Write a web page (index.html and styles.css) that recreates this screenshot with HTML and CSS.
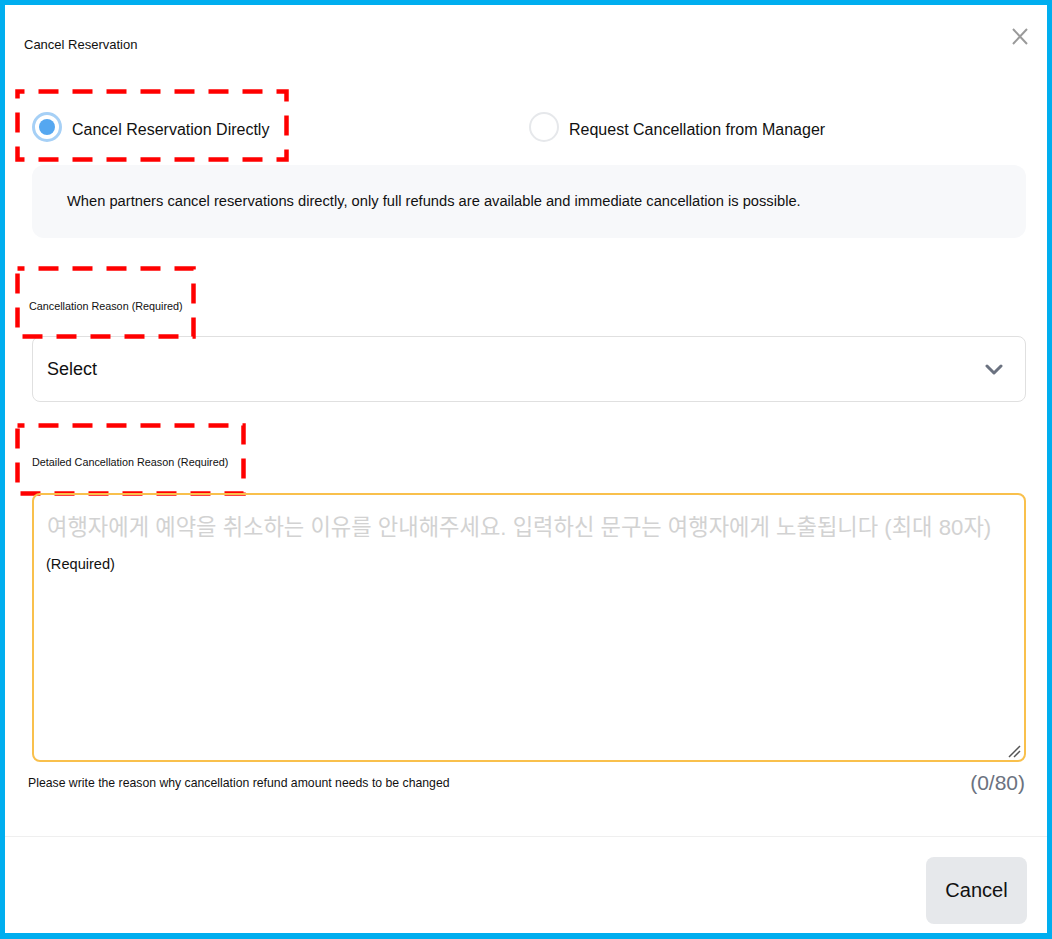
FILE: index.html
```html
<!DOCTYPE html>
<html lang="en">
<head>
    <meta charset="UTF-8">
    <meta name="viewport" content="width=device-width, initial-scale=1.0">
    <title>Cancel Reservation</title>
    <link rel="stylesheet" href="styles.css">
</head>
<body>
    <div class="dialog">
        <header class="dialog-head">
            <h2 class="dialog-title">Cancel Reservation</h2>
            <button class="close-btn" aria-label="Close">
                <svg width="16" height="17" viewBox="0 0 16 17"><path d="M1 1 L15 16 M15 1 L1 16" stroke="#9a9a9a" stroke-width="2" fill="none"/></svg>
            </button>
        </header>

        <section class="dialog-body">
            <div class="options">
                <label class="option">
                    <span class="radio is-checked"></span>
                    <span class="option-text">Cancel Reservation Directly</span>
                    <!-- review marker -->
                    <svg class="mark mark-option" width="274" height="73"><rect x="2.5" y="2.5" width="269" height="68"/></svg>
                </label>
                <label class="option">
                    <span class="radio"></span>
                    <span class="option-text">Request Cancellation from Manager</span>
                </label>
            </div>

            <p class="notice">When partners cancel reservations directly, only full refunds are available and immediate cancellation is possible.</p>

            <div class="field-label label-reason">
                Cancellation Reason (Required)
                <svg class="mark mark-reason" width="181" height="73"><rect x="2.5" y="2.5" width="176" height="68"/></svg>
            </div>
            <div class="select">
                <span>Select</span>
                <svg width="18" height="11" viewBox="0 0 18 11"><path d="M2 2 L9 9 L16 2" stroke="#6b7280" stroke-width="3" fill="none" stroke-linecap="round" stroke-linejoin="round"/></svg>
            </div>

            <div class="field-label label-detail">
                Detailed Cancellation Reason (Required)
                <svg class="mark mark-detail" width="231" height="73"><rect x="2.5" y="2.5" width="226" height="68"/></svg>
            </div>
            <div class="textarea">
                <div class="placeholder">여행자에게 예약을 취소하는 이유를 안내해주세요. 입력하신 문구는 여행자에게 노출됩니다 (최대 80자)</div>
                <div class="required-note">(Required)</div>
                <svg class="resize" width="13" height="13" viewBox="0 0 13 13"><path d="M12 1 L1 12 M12 6 L6 12" stroke="#555" stroke-width="1.5" fill="none"/></svg>
            </div>
            <div class="hint-row">
                <span class="hint">Please write the reason why cancellation refund amount needs to be changed</span>
                <span class="counter">(0/80)</span>
            </div>
        </section>

        <footer class="dialog-foot">
            <button class="btn-cancel">Cancel</button>
        </footer>
    </div>
</body>
</html>
```

FILE: styles.css
```css
* {
    box-sizing: border-box;
}
body {
    margin: 0;
    font-family: "Liberation Sans", Arial, "Noto Sans CJK KR", sans-serif;
    color: #111;
    background: #fff;
}
.dialog {
    width: 1052px;
    height: 939px;
    border: 5px solid #00aeef;
    border-bottom-width: 6px;
    background: #fff;
    display: flex;
    flex-direction: column;
    overflow: hidden;
}

/* header */
.dialog-head {
    display: flex;
    justify-content: space-between;
    align-items: flex-start;
    padding: 23px 19px 0 19px;
}
.dialog-title {
    margin: 10px 0 0 0;
    font-size: 13px;
    line-height: 14px;
    font-weight: normal;
}
.close-btn {
    border: none;
    background: none;
    padding: 0;
    width: 16px;
    height: 17px;
    cursor: pointer;
}
.close-btn svg {
    display: block;
}

/* body */
.dialog-body {
    padding: 0 21px 0 27px;
}
.options {
    display: grid;
    grid-template-columns: 1fr 1fr;
    margin-top: 60px;
}
.option {
    position: relative;
    display: flex;
    align-items: center;
    gap: 10px;
    height: 30px;
    font-size: 16px;
    cursor: pointer;
}
.option-text {
    padding-top: 5px;
}
.radio {
    position: relative;
    width: 30px;
    height: 30px;
    border: 2px solid #e6e8eb;
    border-radius: 50%;
    flex-shrink: 0;
}
.radio.is-checked {
    border: 3px solid #a6d0f6;
}
.radio.is-checked::after {
    content: "";
    position: absolute;
    left: 4px;
    top: 4px;
    width: 16px;
    height: 16px;
    border-radius: 50%;
    background: #55a7f0;
}

.notice {
    margin: 23px 0 0 0;
    padding: 28px 35px;
    background: #f7f8fa;
    border-radius: 12px;
    font-size: 14.7px;
    line-height: 17px;
}

.field-label {
    position: relative;
    display: inline-block;
    font-size: 10.8px;
    line-height: 12px;
}
.label-reason {
    margin: 62px 0 0 -3px;
}
.label-detail {
    margin: 54px 0 0 0;
}

.select {
    display: flex;
    justify-content: space-between;
    align-items: center;
    height: 66px;
    margin-top: 22px;
    padding: 0 22px 0 14px;
    border: 1.5px solid #e0e0e0;
    border-radius: 8px;
    font-size: 18px;
}

.textarea {
    position: relative;
    height: 269px;
    margin-top: 23px;
    padding: 18px 13px;
    border: 2px solid #f9c04c;
    border-radius: 8px;
}
.placeholder {
    font-size: 22.2px;
    line-height: 30px;
    color: #d2d2d2;
    white-space: nowrap;
}
.required-note {
    margin: 12px 0 0 -1px;
    font-size: 14.6px;
    line-height: 18px;
}
.resize {
    position: absolute;
    right: 3px;
    bottom: 2px;
}

.hint-row {
    display: flex;
    justify-content: space-between;
    align-items: center;
    height: 20px;
    margin: 11px 1px 0 -4px;
}
.hint {
    font-size: 12.25px;
}
.counter {
    font-size: 21px;
    color: #6b7280;
}

/* red dashed review markers */
.mark {
    position: absolute;
    pointer-events: none;
}
.mark rect {
    fill: none;
    stroke: #ff0000;
    stroke-width: 4.5;
    stroke-dasharray: 20 14;
    stroke-dashoffset: 13;
}
.mark-option {
    left: -17px;
    top: -23px;
}
.mark-reason {
    left: -14px;
    top: -34px;
}
.mark-detail {
    left: -17px;
    top: -33px;
}

/* footer */
.dialog-foot {
    margin-top: 43px;
    border-top: 1px solid #efefef;
    padding: 20px 20px 0 0;
    display: flex;
    justify-content: flex-end;
}
.btn-cancel {
    width: 101px;
    height: 67px;
    border: none;
    border-radius: 8px;
    background: #e6e8eb;
    font-family: "Liberation Sans", Arial, sans-serif;
    font-size: 20px;
    color: #111;
}
```
